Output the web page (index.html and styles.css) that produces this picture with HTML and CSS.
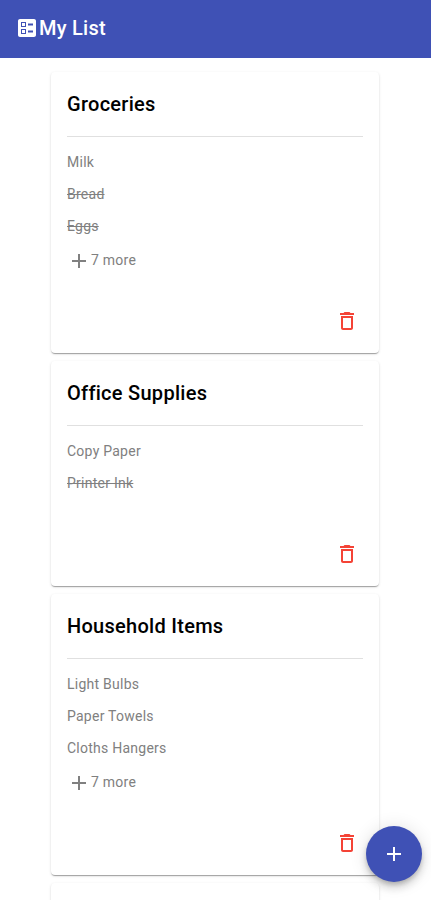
FILE: index.html
```html
<!DOCTYPE html>
<html lang="en">
<head>
<meta charset="utf-8">
<title>My List</title>
<link rel="stylesheet" href="styles.css">
</head>
<body>
<svg class="defs" width="0" height="0">
<symbol id="add" viewBox="0 0 24 24"><path d="M19 13h-6v6h-2v-6H5v-2h6V5h2v6h6v2z"/></symbol>
<symbol id="delete" viewBox="0 0 24 24"><path d="M6 19c0 1.1.9 2 2 2h8c1.1 0 2-.9 2-2V7H6v12zM8 9h8v10H8V9zm7.500-5l-1-1h-5l-1 1H5v2h14V4z"/></symbol>
</svg>
<header class="toolbar">
<svg class="icon logo" viewBox="0 0 24 24"><path fill-rule="evenodd" d="M13 9.500h5v-2h-5v2zm0 7h5v-2h-5v2zm6 4.500H5c-1.100 0-2-.9-2-2V5c0-1.100.9-2 2-2h14c1.100 0 2 .9 2 2v14c0 1.100-.9 2-2 2zM6 11h5V6H6v5zm1-4h3v3H7V7zM6 18h5v-5H6v5zm1-4h3v3H7v-3z"/></svg>
<h1>My List</h1>
</header>
<main class="lists">
<section class="card">
<h2>Groceries</h2>
<ul><li>Milk</li><li class="done">Bread</li><li class="done">Eggs</li></ul>
<div class="more"><svg class="icon"><use href="#add"/></svg><span>7 more</span></div>
<div class="actions"><svg class="icon"><use href="#delete"/></svg></div>
</section>
<section class="card short">
<h2>Office Supplies</h2>
<ul><li>Copy Paper</li><li class="done">Printer Ink</li></ul>
<div class="actions"><svg class="icon"><use href="#delete"/></svg></div>
</section>
<section class="card">
<h2>Household Items</h2>
<ul><li>Light Bulbs</li><li>Paper Towels</li><li>Cloths Hangers</li></ul>
<div class="more"><svg class="icon"><use href="#add"/></svg><span>7 more</span></div>
<div class="actions"><svg class="icon"><use href="#delete"/></svg></div>
</section>
<section class="card"></section>
</main>
<button class="fab" aria-label="Add"><svg class="icon"><use href="#add"/></svg></button>
</body>
</html>
```
FILE: styles.css
```css
* { box-sizing: border-box; }
body { margin: 0; height: 900px; overflow: hidden; font-family: Roboto, sans-serif; background: #fff; display: flex; flex-direction: column; }
.defs { position: absolute; }
.icon { width: 24px; height: 24px; fill: currentColor; flex: none; display: block; }
.toolbar { flex: none; height: 58px; padding: 0 15px 2px; display: flex; align-items: center; background: #3f51b5; color: #fff; }
h1 { margin: 0; font-size: 20px; font-weight: 500; line-height: 32px; letter-spacing: .25px; }
.lists { flex: 1; overflow: hidden; padding: 14px 51px 0; display: flex; flex-direction: column; gap: 8px; }
.card { flex: none; width: 328px; height: 281px; padding: 16px; border-radius: 4px; display: flex; flex-direction: column; background: #fff; box-shadow: 0 2px 1px -1px rgba(0,0,0,.2), 0 1px 1px 0 rgba(0,0,0,.14), 0 1px 3px 0 rgba(0,0,0,.12); }
.short { height: 225px; }
h2 { margin: 0 0 9px; height: 49px; border-bottom: 1px solid #e0e0e0; font-size: 20px; font-weight: 500; line-height: 32px; letter-spacing: .28px; color: #000; }
ul { list-style: none; margin: 0; padding: 0; }
li, .more { height: 32px; line-height: 32px; font-size: 14px; letter-spacing: .25px; color: #808080; }
.done { text-decoration: line-through; }
.more { margin-top: 3px; display: flex; align-items: center; }
.more span { padding-bottom: 2px; }
.actions { margin-top: auto; padding: 0 4px 4px; display: flex; justify-content: flex-end; color: #f44336; }
.fab { position: fixed; right: 9px; bottom: 18px; width: 56px; height: 56px; border: 0; border-radius: 50%; padding: 0; display: flex; align-items: center; justify-content: center; color: #fff; background: #3f51b5; box-shadow: 0 3px 5px -1px rgba(0,0,0,.2), 0 6px 10px 0 rgba(0,0,0,.14), 0 1px 18px 0 rgba(0,0,0,.12); }
```
